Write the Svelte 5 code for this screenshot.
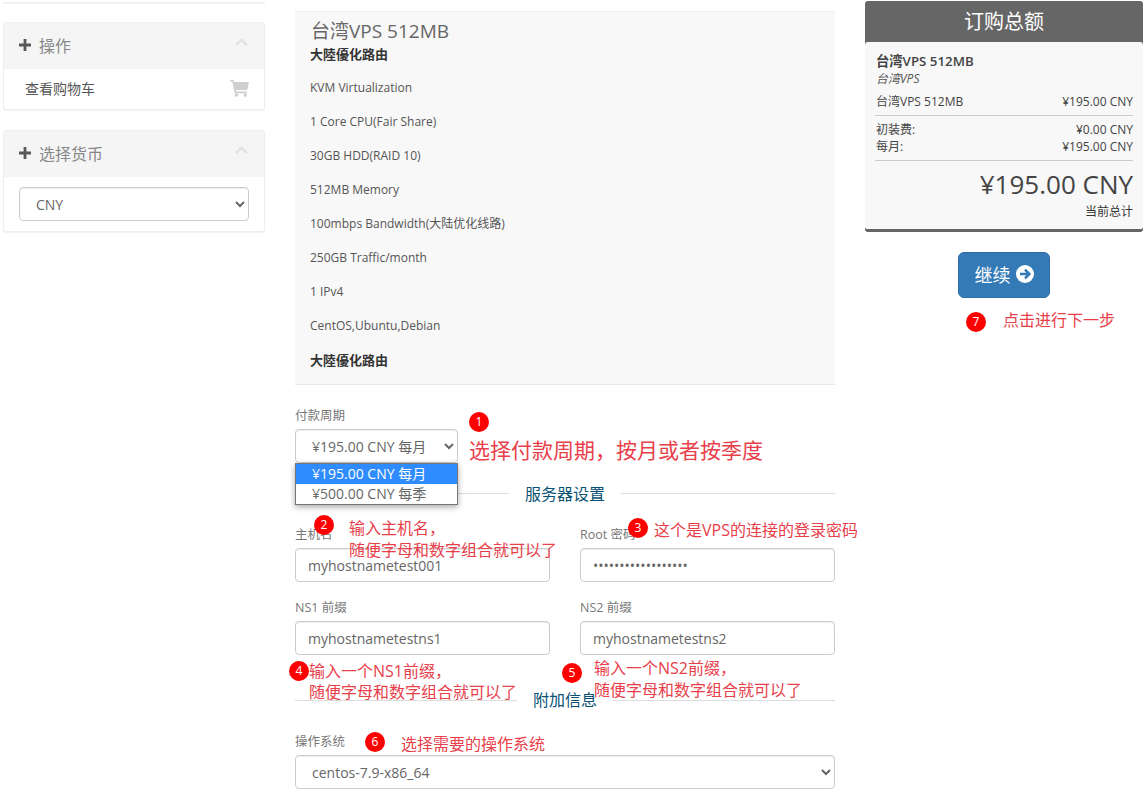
<script>
  const specs = [
    { text: '大陸優化路由', bold: true },
    { text: 'KVM Virtualization' },
    { text: '1 Core CPU(Fair Share)' },
    { text: '30GB HDD(RAID 10)' },
    { text: '512MB Memory' },
    { text: '100mbps Bandwidth(大陆优化线路)' },
    { text: '250GB Traffic/month' },
    { text: '1 IPv4' },
    { text: 'CentOS,Ubuntu,Debian' },
    { text: '大陸優化路由', bold: true, last: true }
  ];
  const notes = [
    { n: 1, x: 469, y: 412 },
    { n: 2, x: 314, y: 515 },
    { n: 3, x: 628, y: 518 },
    { n: 4, x: 289, y: 661 },
    { n: 5, x: 562, y: 663 },
    { n: 6, x: 365, y: 732 },
    { n: 7, x: 966, y: 312 }
  ];
  const texts = [
    { t: '选择付款周期，按月或者按季度', x: 469, y: 436, cls: 'big' },
    { t: '输入主机名，', x: 349, y: 518, cls: '' },
    { t: '随便字母和数字组合就可以了', x: 349, y: 540, cls: '' },
    { t: '这个是VPS的连接的登录密码', x: 654, y: 520, cls: '' },
    { t: '输入一个NS1前缀，', x: 309, y: 661, cls: '' },
    { t: '随便字母和数字组合就可以了', x: 309, y: 682, cls: '' },
    { t: '输入一个NS2前缀，', x: 594, y: 658, cls: '' },
    { t: '随便字母和数字组合就可以了', x: 594, y: 680, cls: '' },
    { t: '选择需要的操作系统', x: 401, y: 734, cls: 'mid' },
    { t: '点击进行下一步', x: 1003, y: 310, cls: '' }
  ];
</script>

<div class="page">
  <aside class="left">
    <div class="sliver"></div>
    <section class="panel">
      <header class="phead">
        <svg class="plus" viewBox="0 0 12 12"><path d="M0 4.6h4.6V0h2.8v4.6H12v2.8H7.400V12H4.600V7.400H0z" fill="#58595b"/></svg>
        <span>操作</span>
        <svg class="chev" viewBox="0 0 12 8"><path d="M1 6.500 6 1.500l5 5" fill="none" stroke="#e2e2e2" stroke-width="2.200"/></svg>
      </header>
      <div class="cart">
        <span>查看购物车</span>
        <svg class="carticon" viewBox="0 0 20 18"><path d="M0 0h3.500l.7 2H20l-1.800 8.500H6.200l.4 1.800h11.400v1.700H5L2.400 1.700H0z" fill="#cfcfcf"/><circle cx="6.800" cy="16" r="1.900" fill="#cfcfcf"/><circle cx="16" cy="16" r="1.900" fill="#cfcfcf"/></svg>
      </div>
    </section>
    <section class="panel">
      <header class="phead">
        <svg class="plus" viewBox="0 0 12 12"><path d="M0 4.6h4.6V0h2.800v4.600H12v2.800H7.400V12H4.600V7.400H0z" fill="#58595b"/></svg>
        <span>选择货币</span>
        <svg class="chev" viewBox="0 0 12 8"><path d="M1 6.500 6 1.500l5 5" fill="none" stroke="#e2e2e2" stroke-width="2.200"/></svg>
      </header>
      <div class="cur">
        <select class="ctl"><option>CNY</option></select>
      </div>
    </section>
  </aside>

  <main class="main">
    <div class="desc">
      <h2>台湾VPS 512MB</h2>
      {#each specs as s}
        <p class:bold={s.bold} class:last={s.last}>{s.text}</p>
      {/each}
    </div>

    <div class="cycle">
      <label for="cyc">付款周期</label>
      <select id="cyc" class="ctl cyc"><option>¥195.00 CNY 每月</option></select>
      <div class="popup">
        <div class="opt on">¥195.00 CNY 每月</div>
        <div class="opt">¥500.00 CNY 每季</div>
      </div>
    </div>

    <div class="sub first"><span>服务器设置</span></div>

    <div class="grid">
      <div class="field">
        <label for="h">主机名</label>
        <input id="h" class="ctl" value="myhostnametest001" />
      </div>
      <div class="field">
        <label for="r">Root 密码</label>
        <input id="r" class="ctl pw" type="password" value="abcdefghijklmnopqr" />
      </div>
      <div class="field">
        <label for="n1">NS1 前缀</label>
        <input id="n1" class="ctl" value="myhostnametestns1" />
      </div>
      <div class="field">
        <label for="n2">NS2 前缀</label>
        <input id="n2" class="ctl" value="myhostnametestns2" />
      </div>
    </div>

    <div class="sub second"><span>附加信息</span></div>

    <div class="os">
      <label for="os">操作系统</label>
      <select id="os" class="ctl"><option>centos-7.9-x86_64</option></select>
    </div>
  </main>

  <aside class="right">
    <div class="summary">
      <h2>订购总额</h2>
      <div class="sbody">
        <div class="pname">台湾VPS 512MB</div>
        <div class="pgroup">台湾VPS</div>
        <div class="row"><span>台湾VPS 512MB</span><span>¥195.00 CNY</span></div>
        <div class="rule"></div>
        <div class="row tight"><span>初装费:</span><span>¥0.00 CNY</span></div>
        <div class="row tight"><span>每月:</span><span>¥195.00 CNY</span></div>
        <div class="rule"></div>
        <div class="total">¥195.00 CNY</div>
        <div class="today">当前总计</div>
      </div>
    </div>
    <div class="actions">
      <button class="go">继续
        <svg viewBox="0 0 18 18"><circle cx="9" cy="9" r="9" fill="#fff"/><path d="M4 9h9M9 4.700 13.300 9 9 13.300" fill="none" stroke="#337ab7" stroke-width="2.600"/></svg>
      </button>
    </div>
  </aside>

  {#each texts as a}
    <div class="note {a.cls}" style="left:{a.x}px;top:{a.y}px">{a.t}</div>
  {/each}
  {#each notes as d}
    <div class="dot" style="left:{d.x}px;top:{d.y}px">{d.n}</div>
  {/each}
</div>

<style>
  :global(body) { margin: 0; background: #fff; overflow: hidden; }
  .page {
    position: relative;
    width: 1144px;
    height: 798px;
    overflow: hidden;
    display: grid;
    grid-template-columns: 262px 540px 278px;
    column-gap: 30px;
    padding-left: 3px;
    box-sizing: border-box;
    font-family: "Open Sans", "Noto Sans CJK SC", sans-serif;
    font-size: 14px;
    color: #58595b;
  }

  .sliver { height: 2px; background: #fff; border-bottom: 1px solid #eee; box-shadow: 0 1px 1px rgba(0,0,0,.05); margin-bottom: 19px; }
  .panel { border: 1px solid #eee; border-radius: 3px; box-shadow: 0 1px 1px rgba(0,0,0,.05); margin-bottom: 20px; background: #fff; box-sizing: border-box; }
  .phead { height: 46px; box-sizing: border-box; padding: 0 15px 2px; background: #f5f5f5; display: flex; align-items: center; font-size: 16px; color: #888; }
  .plus { width: 12px; height: 12px; margin-right: 8px; }
  .chev { width: 13px; height: 9px; margin-left: auto; margin-top: -5px; margin-right: 1px; }
  .cart { height: 40px; box-sizing: border-box; display: flex; align-items: center; justify-content: space-between; padding: 0 15px 2px 21px; color: #555; }
  .carticon { width: 19px; height: 17px; }
  .cur { padding: 10px 15px 10px; }
  .cur .ctl { width: 230px; height: 34px; }

  .ctl {
    display: block;
    box-sizing: border-box;
    width: 100%;
    height: 34px;
    padding: 4px 12px;
    font: inherit;
    color: #666;
    background: #fff;
    border: 1px solid #ccc;
    border-radius: 4px;
    box-shadow: inset 0 1px 1px rgba(0,0,0,.075);
  }
  select.ctl { padding-left: 12px; }

  .desc { margin-top: 11px; height: 374px; box-sizing: border-box; background: #f8f8f8; border-top: 1px solid #efefef; border-bottom: 1px solid #e8e8e8; padding: 7px 15px; font-size: 12px; line-height: 17px; color: #555; }
  .desc h2 { margin: 0 0 3px 1px; font-size: 19px; font-weight: 400; line-height: 24px; color: #666; }
  .desc p { margin: 0 0 17px; }
  .desc p.bold { font-weight: 700; color: #333; margin-bottom: 16px; font-size: 13px; }
  .desc p.last { margin-top: 18px; }

  .cycle { position: relative; margin-top: 22px; }
  label { display: block; font-size: 12.500px; line-height: 18px; color: #777; font-weight: 400; margin-bottom: 4px; }
  .cyc { width: 163px; }
  .popup { position: absolute; left: 0; top: 56px; width: 163px; box-sizing: border-box; background: #fff; border: 1px solid #767676; box-shadow: 0 2px 6px rgba(0,0,0,.35); }
  .opt { height: 20px; line-height: 20px; padding-left: 16px; color: #666; }
  .opt.on { background: #2f8cff; color: #fff; }

  .sub { display: flex; align-items: center; gap: 16px; justify-content: center; font-size: 16px; color: #0a5273; }
  .sub span { white-space: nowrap; }
  .sub.first { margin-top: 20px; height: 20px; }
  .sub.first::before, .sub.first::after { content: ""; flex: 1; height: 1px; background: #ddd; }
  .sub.second { position: relative; margin-top: 42px; height: 20px; }
  .sub.second::before { content: ""; position: absolute; left: 0; right: 0; top: 3px; height: 1px; background: #ddd; }
  .sub.second span { position: relative; margin-top: -14px; padding: 0 16px; background: #fff; line-height: 18px; }

  .grid { display: grid; grid-template-columns: 255px 255px; column-gap: 30px; row-gap: 17px; margin-top: 23px; }
  .pw { letter-spacing: 0; }

  .os { margin-top: 16px; }

  .summary { margin-top: 1px; background: #666; border-radius: 3px; padding-bottom: 3px; }
  .summary h2 { margin: 0; height: 41px; line-height: 41px; text-align: center; color: #fff; font-size: 20px; font-weight: 400; }
  .sbody { background: #f8f8f8; border-radius: 3px 3px 2px 2px; padding: 9px 10px 9px 11px; font-size: 12px; color: #333; }
  .pname { font-size: 13.300px; font-weight: 600; line-height: 20px; color: #444; }
  .pgroup { font-size: 12px; font-style: italic; line-height: 16px; color: #555; }
  .row { display: flex; justify-content: space-between; line-height: 17px; margin-top: 6px; color: #444; }
  .row.tight { margin-top: 0; }
  .rule { height: 1px; background: #ccc; margin: 5px 0 5px -1px; }
  .total { text-align: right; font-size: 26px; line-height: 36px; color: #444; margin-top: 1px; }
  .today { text-align: right; line-height: 16px; color: #333; margin-top: 2px; }

  .actions { display: flex; justify-content: center; margin-top: 20px; }
  .go { width: 92px; height: 46px; border: 1px solid #2e6da4; border-radius: 6px; background: #337ab7; color: #fff; font: inherit; font-size: 18px; display: flex; align-items: center; justify-content: center; gap: 5px; padding: 0 0 2px; }
  .go svg { width: 18px; height: 18px; }

  .note { position: absolute; white-space: nowrap; color: #e8404a; font-size: 16px; line-height: 21px; }
  .note.big { font-size: 21px; line-height: 28px; }
  .dot { position: absolute; width: 20px; height: 20px; border-radius: 50%; background: #f00; color: #fff; font-size: 12px; line-height: 20px; text-align: center; }
</style>
